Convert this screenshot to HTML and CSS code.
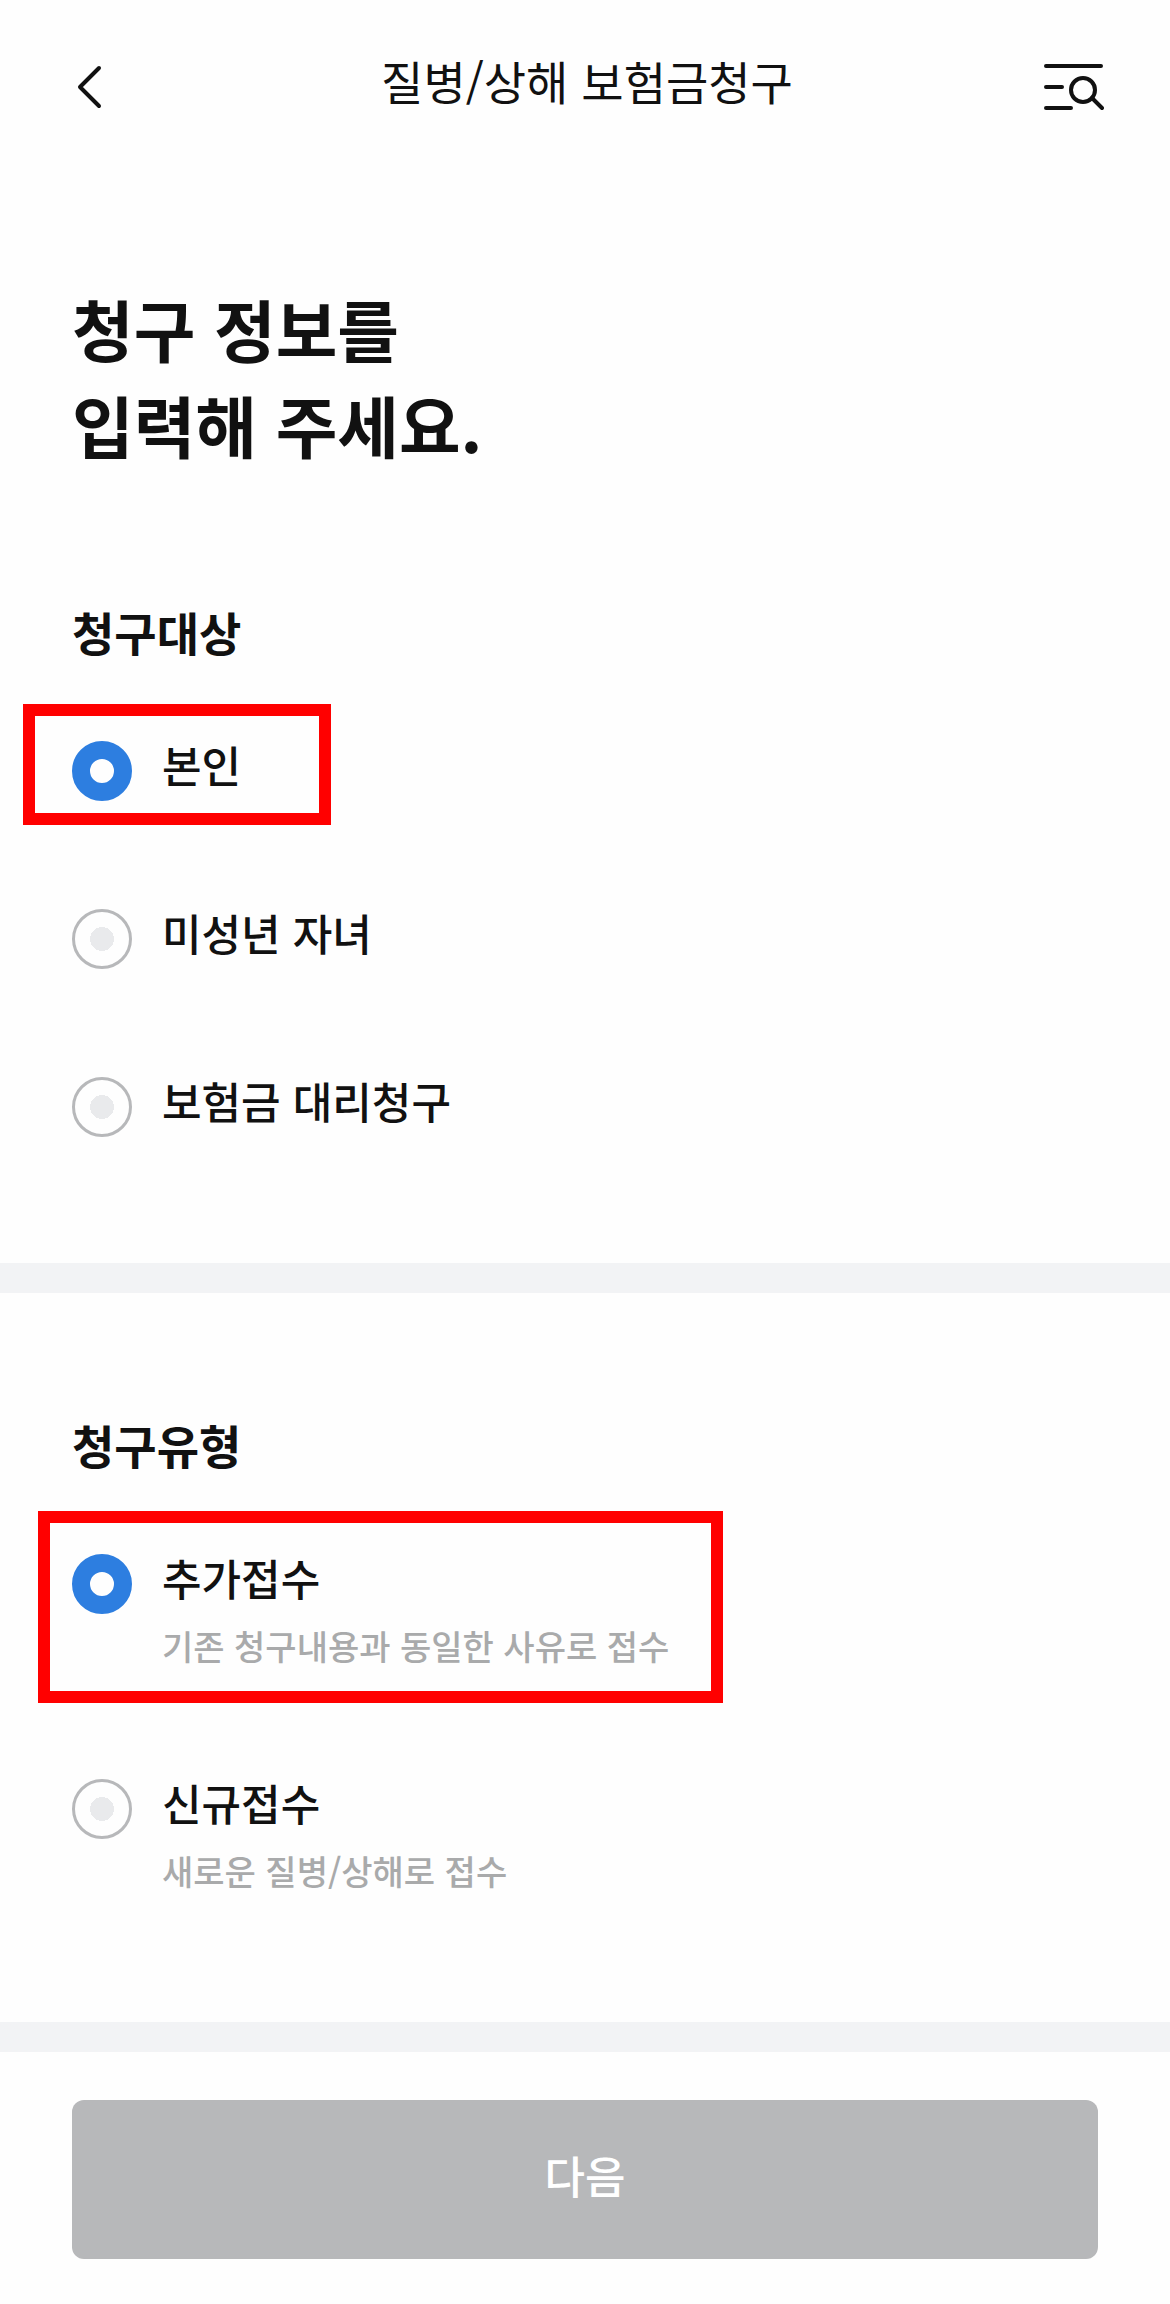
FILE: index.html
```html
<!DOCTYPE html>
<html lang="ko">
<head>
<meta charset="utf-8">
<meta name="viewport" content="width=device-width, initial-scale=1">
<title>질병/상해 보험금청구</title>
<link rel="stylesheet" href="styles.css">
</head>
<body>
<header class="header">
  <button class="icon-button" type="button" aria-label="뒤로">
    <svg class="icon" width="60" height="54" viewBox="0 0 60 54" aria-hidden="true"><path d="M29 8 L10 27 L29 46"/></svg>
  </button>
  <h1 class="header-title">질병/상해 보험금청구</h1>
  <button class="icon-button" type="button" aria-label="메뉴 검색">
    <svg class="icon" width="60" height="54" viewBox="0 0 60 54" aria-hidden="true"><path d="M2 6H57M2 27H18M2 48H27M48 38L58 48"/><circle cx="39" cy="30" r="12"/></svg>
  </button>
</header>
<main>
  <form class="form">
    <section class="section section-first">
      <h2 class="page-title">청구 정보를<br>입력해 주세요.</h2>
      <h3 class="section-title" id="target-title">청구대상</h3>
      <div class="options" role="radiogroup" aria-labelledby="target-title">
        <label class="option marked marked-short">
          <input class="radio" type="radio" name="target" checked>
          <span class="option-label">본인</span>
        </label>
        <label class="option">
          <input class="radio" type="radio" name="target">
          <span class="option-label">미성년 자녀</span>
        </label>
        <label class="option">
          <input class="radio" type="radio" name="target">
          <span class="option-label">보험금 대리청구</span>
        </label>
      </div>
    </section>
    <section class="section">
      <h3 class="section-title" id="type-title">청구유형</h3>
      <div class="options" role="radiogroup" aria-labelledby="type-title">
        <label class="option marked marked-long">
          <input class="radio" type="radio" name="type" checked>
          <span class="option-text">
            <span class="option-label">추가접수</span>
            <span class="option-note">기존 청구내용과 동일한 사유로 접수</span>
          </span>
        </label>
        <label class="option">
          <input class="radio" type="radio" name="type">
          <span class="option-text">
            <span class="option-label">신규접수</span>
            <span class="option-note">새로운 질병/상해로 접수</span>
          </span>
        </label>
      </div>
    </section>
    <div class="actions">
      <button class="next" type="button">다음</button>
    </div>
  </form>
</main>
</body>
</html>
```
FILE: styles.css
```css
* {
  box-sizing: border-box;
}

body {
  margin: 0;
  background: #fefefe;
  color: #111;
  font-family: "Noto Sans CJK KR", "Noto Sans", sans-serif;
}

h1, h2, h3 {
  margin: 0;
}

.header {
  display: flex;
  justify-content: space-between;
  align-items: flex-start;
  padding: 50px 66px 0 70px;
}

.header-title {
  font-size: 46px;
  font-weight: 400;
  line-height: 60px;
}

.icon-button {
  display: flex;
  padding: 10px 0;
  border: 0;
  background: none;
  color: inherit;
}

.icon {
  fill: none;
  stroke: currentColor;
  stroke-width: 4;
  stroke-linecap: round;
  stroke-linejoin: round;
}

.section {
  padding: 121px 72px 126px;
  border-bottom: 30px solid #f2f3f5;
}

.section-first {
  padding-top: 156px;
}

.page-title {
  margin-bottom: 129px;
  font-size: 67px;
  font-weight: 700;
  line-height: 96px;
}

.section-title {
  margin-bottom: 80px;
  font-size: 46px;
  font-weight: 700;
  line-height: 60px;
}

.options {
  display: flex;
  flex-direction: column;
  align-items: flex-start;
  gap: 108px;
}

.option {
  position: relative;
  display: flex;
  align-items: flex-start;
  gap: 30px;
}

.radio {
  appearance: none;
  flex: none;
  width: 60px;
  height: 60px;
  margin: 0;
  border: 3px solid #b7b8ba;
  border-radius: 50%;
  background: radial-gradient(circle, #e9eaec 12px, transparent 12px);
}

.radio:checked {
  border: 18px solid #2d7ee0;
  background: #fefefe;
}

.option-text {
  display: flex;
  flex-direction: column;
  gap: 20px;
}

.option-label {
  font-size: 43px;
  font-weight: 500;
  line-height: 46px;
}

.option-note {
  color: #a9aaab;
  font-size: 34px;
  font-weight: 500;
  line-height: 51px;
}

.marked::before {
  content: "";
  position: absolute;
  border: 12px solid #f00;
  pointer-events: none;
}

.marked-short::before {
  inset: -37px -90px -24px -49px;
}

.marked-long::before {
  inset: -43px -54px -32px -34px;
}

.actions {
  padding: 48px 72px 45px;
}

.next {
  width: 100%;
  padding: 44px 48px 52px;
  border: 0;
  border-radius: 12px;
  background: #b7b8ba;
  color: #fff;
  font-family: inherit;
  font-size: 44px;
  font-weight: 500;
  line-height: 63px;
}
```
